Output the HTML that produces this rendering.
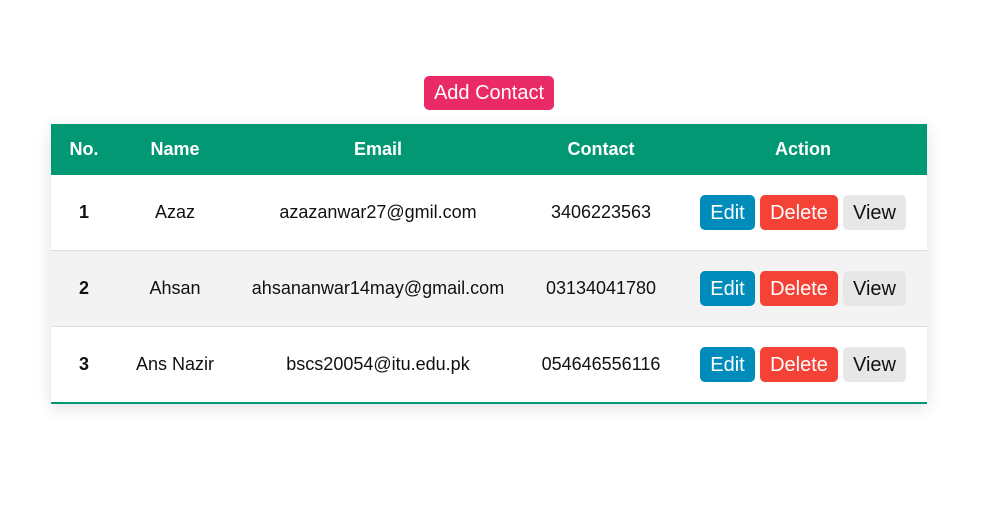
<!DOCTYPE html>
<html><head><style>
body{margin:0;background:#fff;font-family:"Liberation Sans",Arial,sans-serif;width:988px;height:517px;position:relative;overflow:hidden}
.add{position:absolute;left:424px;top:76px;width:130px;height:34px;background:#e92a67;color:#fff;border-radius:5px;font-size:20px;line-height:35px;text-align:center}
.tbl{position:absolute;left:51px;top:124px;width:876px;box-shadow:0 4px 16px rgba(0,0,0,0.12);border-bottom:2px solid #029874}
.row{display:flex;align-items:center;height:76px;border-bottom:1px solid #ddd;font-size:18px;color:#111;box-sizing:border-box}
.row:last-child{border-bottom:none;height:75px}
.row.alt{background:#f3f3f3}
.hd{height:51px;background:#029874;color:#fff;font-weight:bold;border:none;font-size:18px}
.c{text-align:center}
.c1{width:66px}.c2{width:116px}.c3{width:290px}.c4{width:156px}.c5{width:248px;display:flex;justify-content:center}
.b{height:35px;line-height:36px;font-size:20px;border-radius:5px;text-align:center;margin-right:5px}
.e{width:55px;background:#008cba;color:#fff}.d{width:78px;background:#f44336;color:#fff}.v{width:63px;background:#e7e7e7;color:#111;margin-right:0}
</style></head><body>
<div class="add">Add Contact</div>
<div class="tbl">
<div class="row hd"><div class="c c1">No.</div><div class="c c2">Name</div><div class="c c3">Email</div><div class="c c4">Contact</div><div class="c c5">Action</div></div>
<div class="row"><div class="c c1"><b>1</b></div><div class="c c2">Azaz</div><div class="c c3">azazanwar27@gmil.com</div><div class="c c4">3406223563</div><div class="c5"><div class="b e">Edit</div><div class="b d">Delete</div><div class="b v">View</div></div></div>
<div class="row alt"><div class="c c1"><b>2</b></div><div class="c c2">Ahsan</div><div class="c c3">ahsananwar14may@gmail.com</div><div class="c c4">03134041780</div><div class="c5"><div class="b e">Edit</div><div class="b d">Delete</div><div class="b v">View</div></div></div>
<div class="row"><div class="c c1"><b>3</b></div><div class="c c2">Ans Nazir</div><div class="c c3">bscs20054@itu.edu.pk</div><div class="c c4">054646556116</div><div class="c5"><div class="b e">Edit</div><div class="b d">Delete</div><div class="b v">View</div></div></div>
</div>
</body></html>
